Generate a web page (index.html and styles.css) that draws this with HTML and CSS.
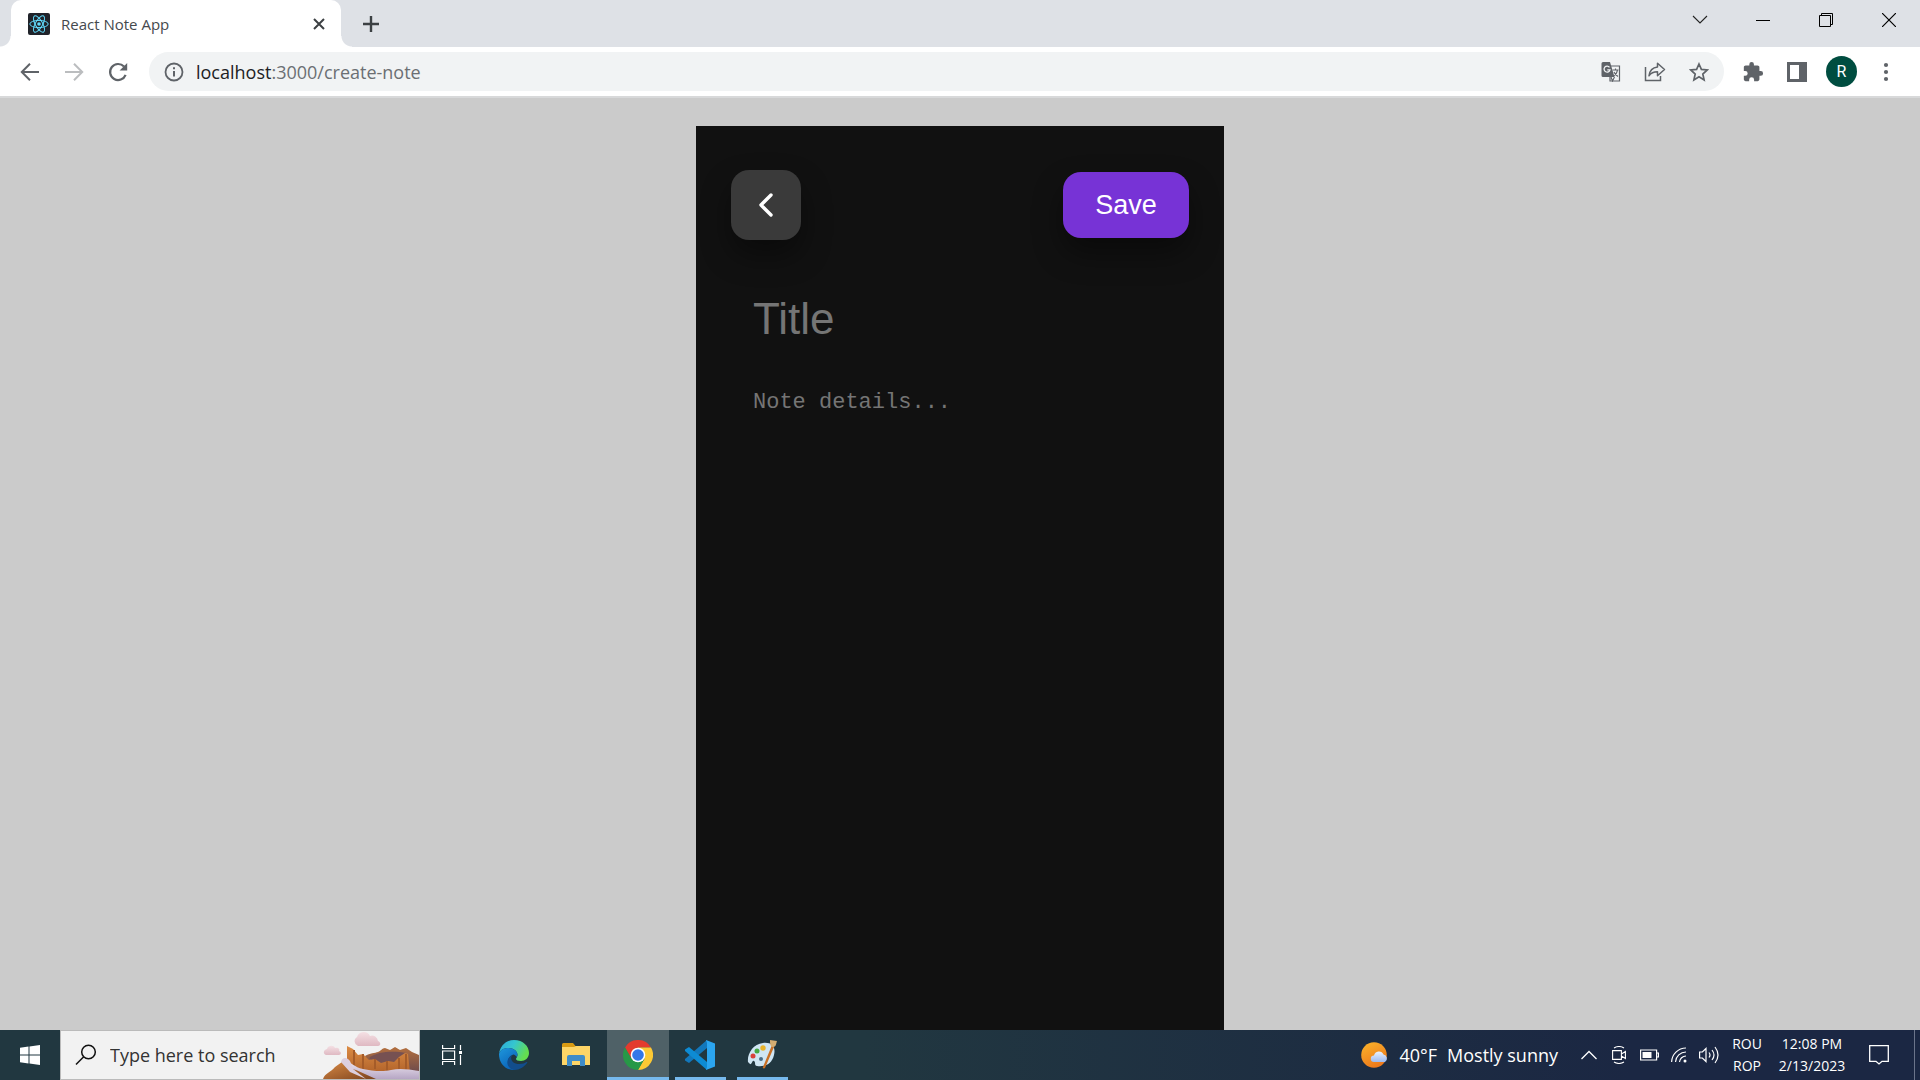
FILE: index.html
```html
<!DOCTYPE html>
<html lang="en">
<head>
<meta charset="utf-8">
<title>React Note App</title>
<link rel="stylesheet" href="styles.css">
</head>
<body>
<header class="browser">
  <div class="tabstrip">
    <div class="tab">
      <svg class="favicon" viewBox="0 0 22 22" width="22" height="22"><rect width="22" height="22" rx="2" fill="#20232a"/><g fill="none" stroke="#61dafb" stroke-width="1"><ellipse cx="11" cy="11" rx="9.2" ry="3.6"/><ellipse cx="11" cy="11" rx="9.2" ry="3.6" transform="rotate(60 11 11)"/><ellipse cx="11" cy="11" rx="9.2" ry="3.6" transform="rotate(120 11 11)"/></g><circle cx="11" cy="11" r="1.8" fill="#61dafb"/></svg>
      <span class="tab-title">React Note App</span>
      <button class="icon-button tab-close" aria-label="Close tab"><svg width="12" height="12" viewBox="0 0 12 12"><path d="M1 1l10 10M11 1L1 11" stroke="#3c4043" stroke-width="2"/></svg></button>
    </div>
    <button class="icon-button new-tab" aria-label="New tab"><svg width="18" height="18" viewBox="0 0 18 18"><path d="M9 1v16M1 9h16" stroke="#3c4043" stroke-width="2.4"/></svg></button>
    <div class="window-controls">
      <button class="icon-button" aria-label="Search tabs"><svg width="16" height="10" viewBox="0 0 16 10"><path d="M1 1l7 7 7-7" fill="none" stroke="#222" stroke-width="1.1"/></svg></button>
      <button class="icon-button" aria-label="Minimize"><svg width="14" height="14" viewBox="0 0 14 14"><path d="M0 7.500h14" stroke="#000"/></svg></button>
      <button class="icon-button" aria-label="Restore"><svg width="14" height="14" viewBox="0 0 14 14"><path d="M.5 2.500h11v11h-11zM2.500 2.500v-2h11v11h-2" fill="none" stroke="#000"/></svg></button>
      <button class="icon-button" aria-label="Close"><svg width="14" height="14" viewBox="0 0 14 14"><path d="M0 0l14 14M14 0L0 14" stroke="#000" stroke-width="1.200"/></svg></button>
    </div>
  </div>
  <div class="toolbar">
    <div class="nav-buttons">
      <button class="icon-button" aria-label="Back"><svg width="20" height="20" viewBox="0 0 20 20"><path d="M19 10H2.500M10 1.800L1.800 10l8.200 8.200" fill="none" stroke="#5f6368" stroke-width="2"/></svg></button>
      <button class="icon-button" aria-label="Forward" disabled><svg width="20" height="20" viewBox="0 0 20 20"><path d="M1 10h16.500M10 1.800l8.200 8.200-8.200 8.200" fill="none" stroke="#bbbdbf" stroke-width="2"/></svg></button>
      <button class="icon-button" aria-label="Reload"><svg width="20" height="20" viewBox="0 0 20 20"><path d="M17.600 12.800A8 8 0 1 1 16 4.600" fill="none" stroke="#5f6368" stroke-width="2.200"/><path d="M19.200 1v7.600h-7.600z" fill="#5f6368"/></svg></button>
    </div>
    <div class="omnibox">
      <svg width="20" height="20" viewBox="0 0 20 20"><circle cx="10" cy="10" r="8.500" fill="none" stroke="#5f6368" stroke-width="1.800"/><path d="M10 9v5.500M10 5.200v2" stroke="#5f6368" stroke-width="2"/></svg>
      <a class="url" href="#create-note"><span class="host">localhost</span>:3000/create-note</a>
      <div class="omnibox-actions">
        <button class="icon-button" aria-label="Translate"><svg width="20" height="20" viewBox="0 0 20 20"><path d="M9 4h9.500v15H9z" fill="#f1f3f4" stroke="#5f6368" stroke-width="1.200"/><path d="M2 0h7l4.500 15H2a1.500 1.500 0 0 1-1.500-1.500v-12A1.500 1.500 0 0 1 2 0z" fill="#5f6368"/><path d="M8.500 5.300A3 3 0 1 0 9 7.800H6.300" fill="none" stroke="#f1f3f4" stroke-width="1.300"/><path d="M11.500 8h6M14.500 6.500V8M16.500 8c-.5 3-2 5-4 6M13 10c.8 2 2 3 4 4.500M10 15l1.500 4 2-4" fill="none" stroke="#5f6368" stroke-width="1.100"/></svg></button>
        <button class="icon-button" aria-label="Share"><svg width="22" height="20" viewBox="0 0 22 20"><path d="M1.500 5v13.500h15V14" fill="none" stroke="#5f6368" stroke-width="1.500"/><path d="M13.500 5V1.200L20.500 7.500l-7 6.300v-4c-4 0-6.500 1-8.500 4 .6-4.800 3.300-8.200 8.500-8.800z" fill="none" stroke="#5f6368" stroke-width="1.500" stroke-linejoin="round"/></svg></button>
        <button class="icon-button" aria-label="Bookmark"><svg width="20" height="20" viewBox="0 0 20 20"><path d="M10 2l2.400 5.400 5.800.6-4.400 4 1.300 5.900-5.100-3.100-5.100 3.100 1.300-5.900L1.800 8l5.800-.6z" fill="none" stroke="#5f6368" stroke-width="1.700"/></svg></button>
      </div>
    </div>
    <div class="browser-actions">
      <button class="icon-button" aria-label="Extensions"><svg width="22" height="22" viewBox="0 0 24 24"><path fill="#5f6368" d="M20.500 11H19V7c0-1.100-.9-2-2-2h-4V3.500a2.500 2.500 0 0 0-5 0V5H4c-1.100 0-2 .9-2 2v3.800h1.500a2.700 2.700 0 0 1 0 5.400H2V20c0 1.100.9 2 2 2h3.800v-1.500a2.700 2.700 0 0 1 5.400 0V22H17c1.100 0 2-.9 2-2v-4h1.500a2.500 2.500 0 0 0 0-5z"/></svg></button>
      <button class="icon-button" aria-label="Side panel"><svg width="20" height="20" viewBox="0 0 20 20"><path fill="#5f6368" fill-rule="evenodd" d="M0 0h20v20H0zM3 3h9v14H3z"/></svg></button>
      <button class="avatar">R</button>
      <button class="icon-button" aria-label="Menu"><svg width="6" height="20" viewBox="0 0 6 20" fill="#5f6368"><circle cx="3" cy="3" r="2.100"/><circle cx="3" cy="10" r="2.100"/><circle cx="3" cy="17" r="2.100"/></svg></button>
    </div>
  </div>
</header>

<main class="page">
  <form class="note">
    <div class="note-header">
      <button type="button" class="back" aria-label="Back to notes"><svg width="14" height="24" viewBox="0 0 14 24"><path d="M12 2L2 12l10 10" fill="none" stroke="#fff" stroke-width="3.400" stroke-linecap="round" stroke-linejoin="round"/></svg></button>
      <button type="button" class="save">Save</button>
    </div>
    <input class="note-title" type="text" placeholder="Title" aria-label="Title" autofocus>
    <textarea class="note-details" placeholder="Note details..." aria-label="Note details"></textarea>
  </form>
</main>

<footer class="taskbar">
  <button class="start" aria-label="Start"><svg width="20" height="20" viewBox="0 0 20 20" fill="#fff"><path d="M0 2.800l8.500-1.200V9.500H0zM9.500 1.400L20 0v9.500H9.500zM0 10.500h8.500v7.900L0 17.200zM9.500 10.500H20V20L9.500 18.600z"/></svg></button>
  <label class="search">
    <svg width="22" height="22" viewBox="0 0 22 22"><circle cx="13.500" cy="8" r="6.800" fill="none" stroke="#111" stroke-width="1.500"/><path d="M8.700 12.800L1 20.500" stroke="#111" stroke-width="1.500"/></svg>
    <input type="text" placeholder="Type here to search" aria-label="Search">
    <svg class="scene" width="96" height="48" viewBox="0 0 96 48">
      <defs>
        <linearGradient id="rock" x1="0" y1="0" x2="1" y2="1"><stop offset="0" stop-color="#d98a45"/><stop offset="1" stop-color="#7c431e"/></linearGradient>
        <linearGradient id="wall" x1="0" y1="0" x2="0" y2="1"><stop offset="0" stop-color="#dc8c45"/><stop offset="1" stop-color="#b1632a"/></linearGradient>
        <linearGradient id="far" x1="0" y1="0" x2="0" y2="1"><stop offset="0" stop-color="#b4703f"/><stop offset="1" stop-color="#6b4a4c"/></linearGradient>
        <linearGradient id="snow" x1="0" y1="0" x2="0" y2="1"><stop offset="0" stop-color="#efe8f2"/><stop offset="1" stop-color="#b6a6c4"/></linearGradient>
        <linearGradient id="cloud" x1="0" y1="0" x2="0" y2="1"><stop offset="0" stop-color="#f4e0e4"/><stop offset="1" stop-color="#dfb9c2"/></linearGradient>
      </defs>
      <path d="M35 12a5 5 0 0 1-1-9 7 7 0 0 1 13-1 6 6 0 0 1 8 5c3 1 3 5 0 5z" transform="translate(0 3)" fill="url(#cloud)"/>
      <path d="M3 24c-3-1-3-5 1-6 1-4 7-4 8-1 4-1 5 2 4 3 3 1 2 4 0 4z" fill="url(#cloud)"/>
      <path d="M42 25c5-3 10-3 13-4 3-1 4-4 7-4l5 2 5-3 5 3 6-2 6 4 7 3v18H46z" fill="url(#far)"/>
      <path d="M46 27c9-7 25-7 37-5l-4 9-24 4z" fill="#765152"/>
      <path d="M24 15l6 3 5 6 5-1 6 6 6-1 6 4 7-2 6 1 5-5 6-4 3 1 2 19H42L24 34z" fill="url(#wall)"/>
      <path d="M31 19v17M40 23v17M52 28v10M64 30v10M76 27v13M83 23v16" stroke="#a55c29" stroke-width="2"/>
      <path d="M24 30c5 2 7 6 16 8s20 3 28 1 17-1 28 1v8H28z" fill="url(#snow)"/>
      <path d="M0 48c2-6 8-7 12-12l7-5 6 6 8 2 20 9z" fill="url(#rock)"/>
      <path d="M18 31c1-5 6-5 9-1l3 8 13 10-16-7z" fill="#dccfe0"/>
    </svg>
  </label>
  <nav class="apps">
    <button class="app" aria-label="Task view"><svg width="20" height="20" viewBox="0 0 20 20" fill="none" stroke="#fff" stroke-width="1.200"><path d="M.6 0v3.500h12V0M.6 6h12v8.500H.6zM.6 20v-3.500h12V20M18.500 0v5M18.500 10v10"/><path d="M17 6h3v3h-3z" fill="#fff" stroke="none"/></svg></button>
    <button class="app" aria-label="Edge"><svg width="30" height="30" viewBox="0 0 30 30">
      <defs><linearGradient id="e1" x1="0" y1="0" x2="1" y2=".4"><stop offset="0" stop-color="#2aa6dc"/><stop offset=".5" stop-color="#35c6cf"/><stop offset="1" stop-color="#64dd4f"/></linearGradient><linearGradient id="e2" x1="0" y1="0" x2=".6" y2="1"><stop offset="0" stop-color="#1e97dc"/><stop offset="1" stop-color="#0a62b8"/></linearGradient></defs>
      <path d="M0 14C1 6 7 0 15 0c9 0 15 6 15 13 0 5-4 8-8 8-3 0-5-1-5-2 0-1 1.500-2 1.500-4 0-4-4-7-9-7C5 8 1 10 0 14z" fill="url(#e1)"/>
      <path d="M0 14c1-4 5-6 9.500-6 5 0 9 3 9 7l-1 2c-1-2-3-3-4-2-3 1-5 4-4 8 1 4 4 6.500 8 7C7 31 0 24 0 14z" fill="url(#e2)"/>
      <path d="M13.500 15c-3 3-1 9 7 9 3 0 5.500-1 7-2 1 0 1 0 .5 1-3 4-7.500 7-12.500 7-5-1-8-5-7-9 .500-3 2.500-5 5-6z" fill="#124d8c"/></svg></button>
    <button class="app" aria-label="File Explorer"><svg width="28" height="24" viewBox="0 0 28 24"><path d="M0 1.500Q0 0 1.500 0H11l2.500 3H28v4H0z" fill="#d99b13"/><path d="M0 4h12l2-1h14v19H0z" fill="#fdd567"/><path d="M5 23V14q0-2 2-2h14q2 0 2 2v9h-5v-5h-8v5z" fill="#3f8cc8"/></svg></button>
    <button class="app active" aria-label="Chrome"><svg width="30" height="30" viewBox="0 0 30 30"><path d="M2 7.500A15 15 0 0 1 28 7.500H15L8.500 18.700z" fill="#e33b2e"/><path d="M28 7.500A15 15 0 0 1 15 30l6.500-11.200L15 7.500z" fill="#fcc934"/><path d="M2 7.500A15 15 0 0 0 15 30l6.500-11.200H8.500z" fill="#279847"/><circle cx="15" cy="15" r="7.300" fill="#fff"/><circle cx="15" cy="15" r="5.800" fill="#3377e8"/></svg></button>
    <button class="app running" aria-label="Visual Studio Code"><svg width="30" height="30" viewBox="0 0 30 30"><path d="M22 0v8L4 23 0 20.500v-1.500z" fill="#1277bb"/><path d="M22 30v-8L4 7 0 9.500V11z" fill="#0d8bd4"/><path d="M21 0l9 3.500v23L21 30l1-3V3z" fill="#2ba5f0"/></svg></button>
    <button class="app running" aria-label="Paint"><svg width="30" height="30" viewBox="0 0 30 30"><path d="M1 22C0 14 6 4 16 3c9-1 13 4 11 12-2 9-9 12-17 11-3 0-1-4-3-5s-2 4-4 3z" fill="#cfe5f3"/><circle cx="6" cy="16" r="2.500" fill="#d9413b"/><circle cx="10" cy="11" r="2.500" fill="#45a843"/><circle cx="16" cy="8" r="2.700" fill="#e8b32b"/><circle cx="14" cy="19" r="2" fill="#4b6d87"/><path d="M25 5l2 2-9 21c-1 1-3 0-2-1z" fill="#c96f24"/><path d="M23 0l7 1c-1 3-1 6-4 6s-3-4-3-7z" fill="#d5ad72"/></svg></button>
  </nav>
  <div class="tray">
    <button class="weather"><svg width="28" height="26" viewBox="0 0 28 26"><defs><linearGradient id="sun" x1="0" y1="0" x2=".5" y2="1"><stop offset="0" stop-color="#fbb52b"/><stop offset="1" stop-color="#ed7a1c"/></linearGradient><linearGradient id="wc" x1="0" y1="0" x2="0" y2="1"><stop offset="0" stop-color="#eaf2ff"/><stop offset="1" stop-color="#9dbaf0"/></linearGradient></defs><circle cx="13" cy="13" r="12.800" fill="url(#sun)"/><path d="M13 20a3.200 3.200 0 0 1 0-6.400 5 5 0 0 1 9.500-1 4 4 0 0 1 1.500 7.400z" fill="url(#wc)"/></svg><span>40°F</span><span>Mostly sunny</span></button>
    <div class="status">
      <button class="icon-button" aria-label="Show hidden icons"><svg width="16" height="10" viewBox="0 0 16 10"><path d="M.5 9L8 1.500 15.500 9" fill="none" stroke="#fff" stroke-width="1.300"/></svg></button>
      <button class="icon-button" aria-label="Meet now"><svg width="14" height="18" viewBox="0 0 14 18" fill="none" stroke="#fff" stroke-width="1.100"><path d="M.6 4.600h8.800v8.800H.6zM9.400 8l4-2.500v7L9.400 10M2 2q5-3 10 0M2 16q5 3 10 0"/></svg></button>
      <button class="icon-button" aria-label="Battery"><svg width="19" height="12" viewBox="0 0 19 12"><path d="M.6 1h16v10H.6zM17 4h1.500v4H17" fill="none" stroke="#fff" stroke-width="1.200"/><path d="M2.500 3h9v6h-9z" fill="#fff"/></svg></button>
      <button class="icon-button" aria-label="Wi-Fi"><svg width="16" height="16" viewBox="0 0 16 16" fill="none" stroke="#fff" stroke-width="1.200"><path d="M.6 15A14.400 14.400 0 0 1 15 1M4.500 15A10.500 10.500 0 0 1 15 5M8.500 15A6.500 6.500 0 0 1 15 9"/><circle cx="14" cy="14" r="1.500" fill="#fff" stroke="none"/></svg></button>
      <button class="icon-button" aria-label="Volume"><svg width="20" height="18" viewBox="0 0 20 18" fill="none" stroke="#fff" stroke-width="1.200"><path d="M.6 6h2.800L7 2.500v13L3.400 12H.6zM10 6.500q2 2.500 0 5M13 4q4 5 0 10M16 1q6 8 0 16"/></svg></button>
    </div>
    <button class="stack"><span>ROU</span><span>ROP</span></button>
    <button class="stack clock"><span>12:08 PM</span><span>2/13/2023</span></button>
    <button class="icon-button notifications" aria-label="Notifications"><svg width="20" height="20" viewBox="0 0 20 20"><path d="M.7.700h18.600v15.600H13L10 19l-3-2.700H.7z" fill="none" stroke="#fff" stroke-width="1.300"/></svg></button>
    <button class="show-desktop" aria-label="Show desktop"></button>
  </div>
</footer>
</body>
</html>
```
FILE: styles.css
```css
* {
  box-sizing: border-box;
}

body {
  margin: 0;
  height: 100vh;
  display: flex;
  flex-direction: column;
  overflow: hidden;
  font-family: "Open Sans", "Noto Sans", sans-serif;
}

button,
input,
textarea {
  margin: 0;
  padding: 0;
  border: 0;
  outline: 0;
  background: none;
  color: inherit;
  font: inherit;
}

svg {
  display: block;
  flex: none;
}

.icon-button {
  display: flex;
  align-items: center;
  justify-content: center;
}

/* Browser chrome */
.browser {
  flex: none;
  border-bottom: 2px solid #d8d9da;
  background: #fff;
}

.tabstrip {
  display: flex;
  height: 47px;
  padding-left: 11px;
  background: #dee1e6;
}

.tab {
  position: relative;
  display: flex;
  align-items: center;
  width: 330px;
  padding: 0 16px 0 17px;
  border-radius: 10px 10px 0 0;
  background: #fff;
}

.tab::before,
.tab::after {
  content: "";
  position: absolute;
  bottom: 0;
  width: 11px;
  height: 11px;
}

.tab::before {
  right: 100%;
  background: radial-gradient(circle at 0 0, transparent 10px, #fff 11px);
}

.tab::after {
  left: 100%;
  background: radial-gradient(circle at 100% 0, transparent 10px, #fff 11px);
}

.tab-title {
  flex: 1;
  margin-left: 11px;
  color: #45494d;
  font-size: 15px;
}

.new-tab {
  width: 60px;
}

.window-controls {
  display: flex;
  height: 40px;
  margin-left: auto;
}

.window-controls button {
  width: 63px;
}

.toolbar {
  display: flex;
  align-items: center;
  height: 49px;
  padding: 0 12px 0 8px;
}

.nav-buttons {
  display: flex;
  width: 141px;
}

.nav-buttons button,
.omnibox-actions button,
.browser-actions .icon-button {
  width: 44px;
  height: 39px;
}

.omnibox {
  display: flex;
  flex: 1;
  align-items: center;
  height: 39px;
  padding: 0 3px 0 15px;
  border-radius: 20px;
  background: #f1f3f4;
}

.url {
  flex: 1;
  margin-left: 12px;
  color: #6b6f73;
  font-size: 18px;
  text-decoration: none;
}

.host {
  color: #202124;
}

.omnibox-actions,
.browser-actions {
  display: flex;
  align-items: center;
}

.browser-actions {
  margin-left: 7px;
}

.avatar {
  width: 31px;
  height: 31px;
  margin: 0 7px;
  border-radius: 50%;
  background: #004d40;
  color: #fff;
  font-family: Roboto, sans-serif;
  font-size: 16px;
}

/* Note page */
.page {
  display: flex;
  flex: 1;
  min-height: 0;
  justify-content: center;
  padding-top: 28px;
  background: #cbcbcb;
}

.note {
  display: flex;
  flex-direction: column;
  width: 100%;
  max-width: 528px;
  padding: 44px 35px 0;
  background: #111;
  color: #fff;
}

.note-header {
  display: flex;
  align-items: center;
  justify-content: space-between;
  margin-bottom: 55px;
}

.back,
.save {
  border-radius: 18px;
  box-shadow: 0 15px 30px rgba(0, 0, 0, 0.4);
}

.back {
  display: flex;
  align-items: center;
  justify-content: center;
  width: 70px;
  height: 70px;
  background: #3a3a3a;
}

.save {
  width: 126px;
  height: 66px;
  background: #7733d6;
  font-family: "Liberation Sans", Arial, sans-serif;
  font-size: 27px;
}

.note-title,
.note-details {
  padding: 0 22px;
}

.note-title {
  height: 48px;
  margin-bottom: 46px;
  font-family: "Liberation Sans", Arial, sans-serif;
  font-size: 44px;
}

.note-details {
  flex: 1;
  resize: none;
  font-family: "Liberation Mono", monospace;
  font-size: 22px;
  line-height: 28px;
}

.note-title::placeholder,
.note-details::placeholder {
  color: #757575;
}

/* Taskbar */
.taskbar {
  display: flex;
  flex: none;
  height: 50px;
  background: linear-gradient(90deg, #213740, #213740 45%, #1b2743 85%);
  color: #fff;
}

.start {
  display: flex;
  align-items: center;
  justify-content: center;
  width: 60px;
}

.search {
  display: flex;
  align-items: center;
  width: 360px;
  padding-left: 14px;
  border: 1px solid #bbb;
  background: #f2f2f2;
}

.search input {
  flex: 1;
  min-width: 0;
  margin-left: 13px;
  font-size: 18px;
}

.search input::placeholder {
  color: #333;
}

.apps {
  display: flex;
  margin-left: 1px;
}

.app {
  display: flex;
  align-items: center;
  justify-content: center;
  width: 62px;
}

.active {
  background: #4f6167;
  box-shadow: inset 0 -3px #76b9ed;
}

.running {
  background: linear-gradient(#76b9ed, #76b9ed) center bottom / 51px 3px no-repeat;
}

.tray {
  display: flex;
  margin-left: auto;
}

.weather {
  display: flex;
  align-items: center;
  gap: 10px;
  font-size: 18px;
}

.status {
  display: flex;
  margin-left: 16px;
}

.status button {
  width: 30px;
}

.stack {
  display: flex;
  flex-direction: column;
  align-items: center;
  justify-content: center;
  width: 46px;
  font-size: 14px;
  line-height: 22px;
}

.clock {
  width: 84px;
}

.notifications {
  width: 50px;
}

.show-desktop {
  width: 6px;
  margin-left: 10px;
  border-left: 1px solid #6b748a;
}
```
